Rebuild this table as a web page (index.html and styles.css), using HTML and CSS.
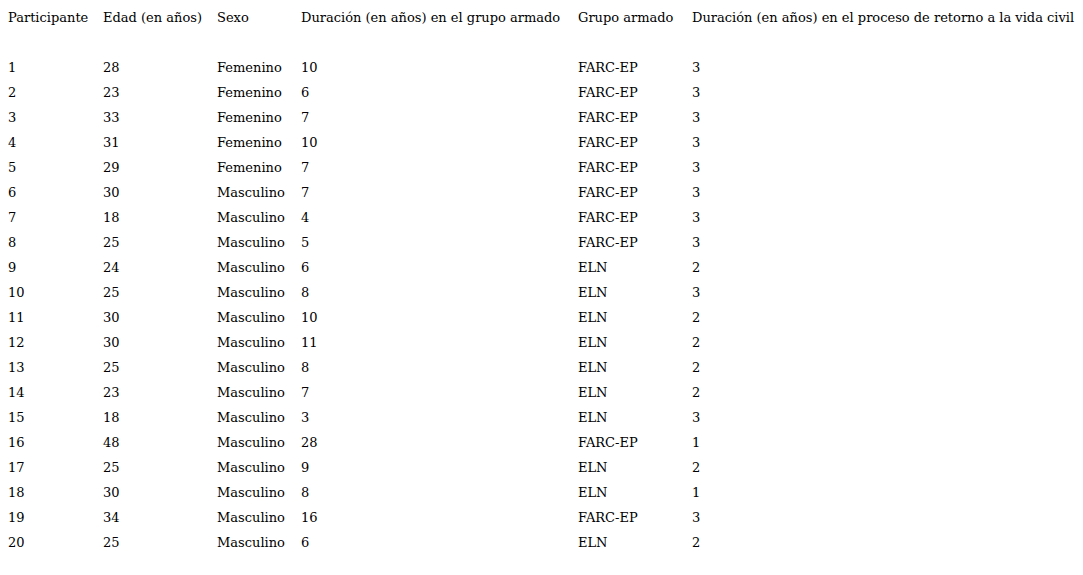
FILE: index.html
```html
<!DOCTYPE html>
<html lang="es">
<head>
<meta charset="utf-8">
<title>Participantes</title>
<link rel="stylesheet" href="styles.css">
</head>
<body>
<table class="data">
<colgroup>
<col class="c1"><col class="c2"><col class="c3"><col class="c4"><col class="c5"><col class="c6">
</colgroup>
<thead>
<tr><th>Participante</th><th>Edad (en años)</th><th>Sexo</th><th>Duración (en años) en el grupo armado</th><th>Grupo armado</th><th>Duración (en años) en el proceso de retorno a la vida civil</th></tr>
<tr class="spacer"><td colspan="6"></td></tr>
</thead>
<tbody>
<tr><td>1</td><td>28</td><td>Femenino</td><td>10</td><td>FARC-EP</td><td>3</td></tr>
<tr><td>2</td><td>23</td><td>Femenino</td><td>6</td><td>FARC-EP</td><td>3</td></tr>
<tr><td>3</td><td>33</td><td>Femenino</td><td>7</td><td>FARC-EP</td><td>3</td></tr>
<tr><td>4</td><td>31</td><td>Femenino</td><td>10</td><td>FARC-EP</td><td>3</td></tr>
<tr><td>5</td><td>29</td><td>Femenino</td><td>7</td><td>FARC-EP</td><td>3</td></tr>
<tr><td>6</td><td>30</td><td>Masculino</td><td>7</td><td>FARC-EP</td><td>3</td></tr>
<tr><td>7</td><td>18</td><td>Masculino</td><td>4</td><td>FARC-EP</td><td>3</td></tr>
<tr><td>8</td><td>25</td><td>Masculino</td><td>5</td><td>FARC-EP</td><td>3</td></tr>
<tr><td>9</td><td>24</td><td>Masculino</td><td>6</td><td>ELN</td><td>2</td></tr>
<tr><td>10</td><td>25</td><td>Masculino</td><td>8</td><td>ELN</td><td>3</td></tr>
<tr><td>11</td><td>30</td><td>Masculino</td><td>10</td><td>ELN</td><td>2</td></tr>
<tr><td>12</td><td>30</td><td>Masculino</td><td>11</td><td>ELN</td><td>2</td></tr>
<tr><td>13</td><td>25</td><td>Masculino</td><td>8</td><td>ELN</td><td>2</td></tr>
<tr><td>14</td><td>23</td><td>Masculino</td><td>7</td><td>ELN</td><td>2</td></tr>
<tr><td>15</td><td>18</td><td>Masculino</td><td>3</td><td>ELN</td><td>3</td></tr>
<tr><td>16</td><td>48</td><td>Masculino</td><td>28</td><td>FARC-EP</td><td>1</td></tr>
<tr><td>17</td><td>25</td><td>Masculino</td><td>9</td><td>ELN</td><td>2</td></tr>
<tr><td>18</td><td>30</td><td>Masculino</td><td>8</td><td>ELN</td><td>1</td></tr>
<tr><td>19</td><td>34</td><td>Masculino</td><td>16</td><td>FARC-EP</td><td>3</td></tr>
<tr><td>20</td><td>25</td><td>Masculino</td><td>6</td><td>ELN</td><td>2</td></tr>
</tbody>
</table>
</body>
</html>
```

FILE: styles.css
```css
html, body {
  margin: 0;
  padding: 0;
  background: #ffffff;
}
body {
  padding: 5px 0 0 8px;
  font-family: "DejaVu Serif", serif;
  font-size: 13px;
  color: #000000;
}
.data {
  border-collapse: collapse;
  table-layout: fixed;
  width: 1075px;
}
.data th,
.data td {
  padding: 0;
  height: 25px;
  line-height: 25px;
  text-align: left;
  font-weight: normal;
  white-space: nowrap;
  vertical-align: middle;
}
.c1 { width: 95px; }
.c2 { width: 114px; }
.c3 { width: 84px; }
.c4 { width: 277px; }
.c5 { width: 114px; }
.c6 { width: auto; }
```
